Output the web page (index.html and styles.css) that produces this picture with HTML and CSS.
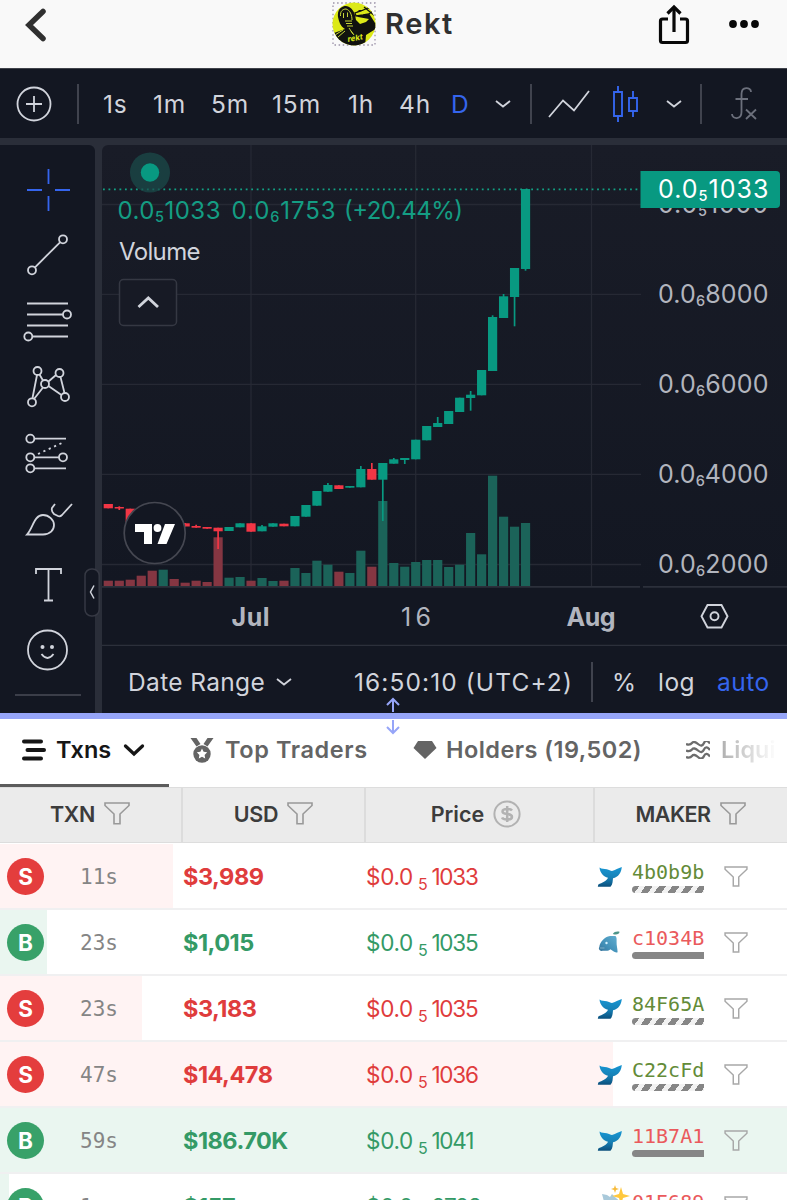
FILE: index.html
```html
<!DOCTYPE html>
<html lang="en">
<head>
<meta charset="utf-8">
<title>Rekt</title>
<link rel="stylesheet" href="styles.css">
</head>
<body>
<svg width="0" height="0" class="defs" aria-hidden="true">
  <defs>
    <linearGradient id="sea" x1="0" y1="0" x2="0" y2="1"><stop offset="0" stop-color="#1796d3"/><stop offset=".55" stop-color="#1680b5"/><stop offset="1" stop-color="#0b4f7c"/></linearGradient>
    <linearGradient id="dol" x1="1" y1="0" x2="0" y2="1"><stop offset="0" stop-color="#62afd0"/><stop offset=".6" stop-color="#4290b8"/><stop offset="1" stop-color="#356f96"/></linearGradient>
    <symbol id="funnel" viewBox="0 0 26 23"><path d="M1 1H25V3.500L16 12V21.800H10V12L1 3.500Z" fill="none" stroke="currentColor" stroke-width="1.600"/></symbol>
    <symbol id="whale" viewBox="0 0 26 24"><path d="M2.500 2.500C5 4.300 7 3.600 9.800 4.200C12 4.700 13.500 6 15 6C17 6 18.500 4.200 21 3.600L24.800 2C24.300 7.500 21.500 12.200 16 13.200C15.600 16 16 18.800 13.500 21.800H.8L1.300 19.400C5 18 9.500 16 11 12.800C6.500 11.500 3 8 2.500 2.500Z" fill="url(#sea)"/></symbol>
    <symbol id="dolphin" viewBox="0 0 26 24"><path d="M2.300 16C3 11 7.500 5.800 13 5H18.500C20 6.500 19.600 9 19.600 11C19.400 14.500 20.600 17.500 20.600 21.300C17.600 22.300 16 19.500 13.300 18.300C11.500 20.600 8.200 19.500 5.500 19.700C3 20.700 1 18 2.300 16Z" fill="url(#dol)"/><path d="M15.800 3C16.800.6 20.500 0 22.500.8C22.400 3.300 19.200 4.300 15.800 3Z" fill="#4d9589"/><circle cx="9.500" cy="12" r="1.200" fill="#d5f2ff"/><path d="M3 17H7.500" stroke="#8fbdd0" stroke-width=".8"/></symbol>
  </defs>
</svg>

<header class="top">
  <svg class="back" width="24" height="34" viewBox="0 0 24 34"><path d="M20 3.500L6 17L20 30.500" fill="none" stroke="#303030" stroke-width="5.500" stroke-linecap="round"/></svg>
  <div class="title">
    <svg width="46" height="46" viewBox="0 0 46 46">
      <rect x="2" y="2" width="42" height="42" fill="none" stroke="#9b92a8" stroke-width="1.300" stroke-dasharray="1.500 2.600"/>
      <clipPath id="coin"><circle cx="23" cy="23" r="21.500"/></clipPath>
      <g clip-path="url(#coin)"><rect width="46" height="46" fill="#dce918"/>
        <path d="M7 16C6 8 11 5 15 5C21 6 24 11 25 19L29 23L35 21L38 18L27 16L24 13L28 9L36 9L39 14L44 22L46 27L35 34L34 46H9L6 37L3 32L14 28C9 25 8 20 7 16Z" fill="#11120f"/>
        <path d="M9.500 15C9 10 12 8 15 8C19 9 21 14 21 19" fill="none" stroke="#c6d437" stroke-width="1"/>
        <path d="M12.500 12V17M16.500 11.500V16M14 20H21M15 22.500H21M16 25H22M18 27L22 33M12 29L4 34M14 30L7 36M20 30L23 34" stroke="#c6d437" stroke-width="1"/>
        <path d="M25 15L24 12L30 10L37 7L43 9L38 13L32 14Z" fill="#dce918" stroke="#11120f" stroke-width="1.300"/><path d="M33 6L44 15" stroke="#11120f" stroke-width="1.200"/>
      </g>
      <text x="17" y="41" class="coin-word" transform="rotate(-10 17 41)">rekt</text>
    </svg>
    <h1>Rekt</h1>
  </div>
  <svg class="share" width="34" height="42" viewBox="0 0 34 42" fill="none" stroke="#080808" stroke-width="3.200"><path d="M11 15H5.500Q3.500 15 3.500 17V36.500Q3.500 38.500 5.500 38.500H28.500Q30.500 38.500 30.500 36.500V17Q30.500 15 28.500 15H23"/><path d="M17 28V3"/><path d="M10.500 9.500L17 3L23.500 9.500"/></svg>
  <svg class="more" width="32" height="10" viewBox="0 0 32 10"><circle cx="5" cy="5" r="3.900"/><circle cx="16" cy="5" r="3.900"/><circle cx="27" cy="5" r="3.900"/></svg>
</header>

<nav class="intervals">
  <svg width="36" height="36" viewBox="0 0 36 36" fill="none" stroke="#d1d4dc" stroke-width="1.800"><circle cx="18" cy="18" r="16.500"/><path d="M10 18H26M18 10V26"/></svg>
  <i class="rule"></i>
  <span>1s</span><span>1m</span><span>5m</span><span>15m</span><span>1h</span><span>4h</span><span class="on">D</span>
  <svg width="16" height="10" viewBox="0 0 16 10" fill="none" stroke="#d1d4dc" stroke-width="1.800"><path d="M1 2L8 7.500L15 2"/></svg>
  <i class="rule"></i>
  <svg width="42" height="28" viewBox="0 0 42 28" fill="none" stroke="#d1d4dc" stroke-width="1.800"><path d="M1 27L15 10.500L26 20.500L41 1"/></svg>
  <svg width="26" height="38" viewBox="0 0 26 38" fill="none" stroke="#3565ed" stroke-width="1.900"><path d="M2 7H10V31H2ZM6 1V7M6 31V37M17 13H25V26H17ZM21 6V13M21 26V32"/></svg>
  <svg width="16" height="10" viewBox="0 0 16 10" fill="none" stroke="#d1d4dc" stroke-width="1.800"><path d="M1 2L8 7.500L15 2"/></svg>
  <i class="rule"></i>
  <svg width="28" height="36" viewBox="0 0 28 36" fill="none" stroke="#6c707c" stroke-width="1.800"><path d="M21 6C21 1 11.500 0 11.500 8V26C11.500 34 2 33.500 2 28M5.500 13H18M16 23.500L26 33M26 23.500L16 33"/></svg>
</nav>

<main class="workspace">
  <aside class="tools">
    <svg width="95" height="569" viewBox="0 145 95 569" fill="none" stroke="#d1d4dc" stroke-width="1.800">
      <g stroke="#3565ed"><path d="M48.500 169V184M48.500 196V211M27 190H42M55 190H70"/></g>
      <circle cx="63" cy="239.300" r="4"/><circle cx="32" cy="270.300" r="4"/><path d="M35 267.300L60 242.300"/>
      <path d="M27 303.500H68M27 314.500H63M27 325.500H68M32 336.500H68"/><circle cx="67" cy="314.500" r="4"/><circle cx="28.300" cy="336.500" r="4"/>
      <circle cx="37.500" cy="371" r="4"/><circle cx="59.500" cy="373" r="4"/><circle cx="45" cy="384" r="4"/><circle cx="32" cy="402.300" r="4"/><circle cx="65" cy="397" r="4"/><path d="M37 375L32.500 398M39.500 374.500L43 380.500M56 375L48.500 381.500M43 387.500L34 399M48.500 386L61.500 395M60.500 377L64.500 393"/>
      <circle cx="30.300" cy="438.700" r="4"/><circle cx="30.300" cy="457.300" r="4"/><circle cx="63" cy="457.300" r="4"/><circle cx="30.300" cy="468.300" r="4"/><path d="M34 438.700H66M34 457.300H59M34 468.300H66"/><path d="M38 454L63 442.500" stroke-dasharray="2.200 3.700"/>
      <path d="M27 534.500C33 528 34 515 43 515C49 515 54 520 54 525C54 530 50 534.500 43 534.500ZM55 504L52 508Q51 511 54 514L58 516Q60 517 62 515L72 504"/>
      <path d="M36 574V569H61V574M48.500 569V600.500M44 600.500H53"/>
      <circle cx="47.500" cy="650" r="19.500"/><path d="M41.500 654Q47.500 662 53.500 654"/><g fill="#d1d4dc" stroke="none"><circle cx="42.500" cy="647" r="2"/><circle cx="52" cy="647" r="2"/></g>
      <path d="M15 695H81" stroke="#3b3e49"/>
    </svg>
  </aside>
  <section class="chart">
    <svg id="plot" width="685" height="501" viewBox="102 145 685 501">
      <g stroke="#262934" stroke-width="1.300"><path d="M102 204.500H641M102 294.300H641M102 384.300H641M102 474.300H641M102 564.500H641M251 145V586M415.700 145V586M591.500 145V586"/></g>
      <g id="bars"></g>
      <path d="M102 586.800H640M643 586.800H787M102 645.500H787" stroke="#2c303b" stroke-width="1.700"/>
      <path d="M103 189.300H640" stroke="#12a184" stroke-width="1.700" stroke-dasharray="1.800 3.690"/>
      <circle cx="150" cy="172.500" r="20" fill="#1a4c4b" fill-opacity=".72"/><circle cx="150" cy="172.500" r="9.200" fill="#089981"/>
      <g class="quote"><text x="117.500" y="218.500" textLength="103">0.0<tspan class="sub" dy="3">5</tspan><tspan dy="-3">1033</tspan></text><text x="231.500" y="218.500" textLength="104">0.0<tspan class="sub" dy="3">6</tspan><tspan dy="-3">1753</tspan></text><text x="344" y="218.500" textLength="119">(+20.44%)</text></g>
      <text class="study" x="119" y="260" textLength="81.500">Volume</text>
      <rect x="119.500" y="279.500" width="57" height="46" rx="4" fill="#171a25" stroke="#353843" stroke-width="1.500"/>
      <path d="M138.500 307L148.300 298L158 307" fill="none" stroke="#d1d4dc" stroke-width="2.800"/>
      <circle cx="154.700" cy="533" r="30.500" fill="#131722" stroke="#454751" stroke-width="1.700"/>
      <path d="M135 524H152V544H144V532H135ZM165 524H175L166.500 544H157.500Z" fill="#fff"/><circle cx="157.500" cy="528" r="3.900" fill="#fff"/>
      <g class="scale">
        <text x="658" y="212.500" textLength="110">0.0<tspan class="sub" dy="3">5</tspan><tspan dy="-3">1000</tspan></text>
        <text x="658" y="302.500" textLength="110.500">0.0<tspan class="sub" dy="3">6</tspan><tspan dy="-3">8000</tspan></text>
        <text x="658" y="392.500" textLength="110.500">0.0<tspan class="sub" dy="3">6</tspan><tspan dy="-3">6000</tspan></text>
        <text x="658" y="482.500" textLength="110.500">0.0<tspan class="sub" dy="3">6</tspan><tspan dy="-3">4000</tspan></text>
        <text x="658" y="572.700" textLength="110.500">0.0<tspan class="sub" dy="3">6</tspan><tspan dy="-3">2000</tspan></text>
        <path d="M640.500 171H776Q780 171 780 175V204Q780 208 776 208H640.500Z" fill="#089981"/>
        <text class="last" x="658" y="197.500" textLength="110.500">0.0<tspan class="sub" dy="3">5</tspan><tspan dy="-3">1033</tspan></text>
        <text class="month" x="231.500" y="625.500" textLength="38">Jul</text><text x="401" y="625.500" textLength="30">16</text><text class="month" x="566.500" y="625.500" textLength="49">Aug</text>
      </g>
      <g fill="none" stroke="#d1d4dc" stroke-width="1.900"><path d="M707.500 605H721.500L727.500 616.300L721.500 627.500H707.500L701.500 616.300Z"/><circle cx="714.500" cy="616.300" r="4"/></g>
    </svg>
    <footer class="range">
      <span class="date">Date Range</span>
      <svg width="16" height="10" viewBox="0 0 16 10" fill="none" stroke="#d1d4dc" stroke-width="1.800"><path d="M1 2L8 7.500L15 2"/></svg>
      <span class="clock">16:50:10 (UTC+2)</span><i class="rule"></i><span>%</span><span>log</span><span class="on">auto</span>
    </footer>
  </section>
  <svg class="fold" width="16" height="50" viewBox="0 0 16 50" fill="#131722"><rect x="1" y="1" width="14.200" height="47" rx="6.500" stroke="#363944" stroke-width="1.500"/><path d="M10 17.500L6.500 24L10 30.500" fill="none" stroke="#d1d4dc" stroke-width="1.500"/></svg>
</main>

<div class="splitter">
  <svg width="16" height="38" viewBox="0 0 16 38" fill="none" stroke="#96a5f8" stroke-width="2"><path d="M8 15V2M2 8L8 2L14 8M8 23V36M2 30L8 36L14 30"/></svg>
</div>

<nav class="tabs">
  <div class="tab active">
    <svg width="26" height="24" viewBox="0 0 26 24" stroke="#161616" stroke-width="4" stroke-linecap="round"><path d="M3 3.500H20M6.500 12H23M3 20.500H20"/></svg>
    <span class="t-txns">Txns</span>
    <svg width="22" height="14" viewBox="0 0 22 14" fill="none" stroke="#161616" stroke-width="3.300" stroke-linecap="round"><path d="M2.500 3L11 11L19.500 3"/></svg>
  </div>
  <div class="tab traders"><svg width="24" height="26" viewBox="0 0 24 26" fill="#646464"><path d="M.5 1H6.500L10.500 7L6.500 9.500ZM17.500 1H23.500L17.500 9.500L13.500 7Z"/><circle cx="12" cy="17" r="8.700"/><path d="M12 11.500L13.600 14.800L17.200 15.300L14.600 17.900L15.200 21.500L12 19.800L8.800 21.500L9.400 17.900L6.800 15.300L10.400 14.800Z" fill="#fff"/></svg><span class="t-top">Top Traders</span></div>
  <div class="tab holders"><svg width="24" height="20" viewBox="0 0 24 20"><path d="M5 1H19L23.500 8L12 19L.5 8Z" fill="#646464"/></svg><span class="t-hold">Holders (19,502)</span></div>
  <div class="tab liquid"><svg width="24" height="18" viewBox="0 0 24 18" fill="none" stroke="#6c6c6c" stroke-width="2.300"><path d="M0 3Q4 4.500 6 2T12 3T18 2T24 2.500M0 9.500Q4 11 6 8.500T12 9.500T18 8.500T24 9M0 16Q4 17.500 6 15T12 16T18 15T24 15.500"/></svg><span class="fade">Liquid</span></div>
</nav>

<div class="thead">
  <div>TXN<svg class="hf" width="26" height="23"><use href="#funnel"/></svg></div>
  <div>USD<svg class="hf" width="26" height="23"><use href="#funnel"/></svg></div>
  <div>Price<svg class="coin" width="28" height="28" viewBox="0 0 28 28" fill="none" stroke="#b2b2b2" stroke-width="2"><circle cx="14" cy="14" r="12.600"/><path stroke-width="2.500" d="M19 10.500Q18 9 14.500 9Q9.500 9 9.500 11.500Q9.500 13.500 14 14Q19 14.500 19 17Q19 19.500 14 19.500Q10 19.500 9 17.500M14.200 6V22"/></svg></div>
  <div>MAKER<svg class="hf" width="26" height="23"><use href="#funnel"/></svg></div>
</div>

<section class="rows" id="rows"></section>
<script src="app.js"></script>
</body>
</html>
```
FILE: styles.css
```css
* { box-sizing: border-box; }
body { margin: 0; width: 787px; height: 1200px; overflow: hidden; background: #fff; font-family: Inter, "Liberation Sans", sans-serif; }
svg { display: block; flex: none; }
.defs { position: absolute; }

.top { height: 68px; display: grid; grid-template-columns: 331px 325px 72px 1fr; background: #f9f9f9; color: #303030; }
.back { margin: 8px 0 0 23px; }
.title { display: flex; gap: 8px; padding-top: 1px; }
.title h1 { margin: 3px 0 0; font-size: 29px; line-height: 40px; font-weight: 600; letter-spacing: 1.6px; }
.coin-word { font: italic 700 8px Inter, sans-serif; fill: #dce918; }
.share { margin: 4px 0 0 1px; }
.more { margin: 19px 0 0; fill: #080808; }

.intervals { height: 77px; display: grid; grid-template-columns: 61px 26px 50px 58px 61px 76px 51px 52px 44px 35px 18px 64px 54px 34px 29px 1fr; align-items: center; padding: 0 0 0 16px; background: #131722; border-top: 1px solid #40434b; border-bottom: 7px solid #2a2e39; color: #d1d4dc; font-size: 24.500px; letter-spacing: .9px; }
.intervals svg:last-child { margin-left: 1px; }
.on { color: #3565ed; }
.rule { width: 1.500px; height: 40px; background: #40434e; }

.workspace { height: 569px; display: grid; grid-template-columns: 95px 685px; column-gap: 7px; background: #2a2e39; position: relative; }
.tools { background: #131722; border-top-right-radius: 6px; height: 569px; }
.chart { background: linear-gradient(#191c27, #131722 441px); border-top-left-radius: 6px; }
.fold { position: absolute; left: 84px; top: 423px; }
.quote { font-size: 24px; fill: #149d83; }
.study { font-size: 24px; fill: #d1d4dc; }
.scale { font-size: 25px; fill: #b2b5be; }
.scale .last { fill: #fff; }
.scale .month { font-weight: 700; }
.sub { font-size: 14.500px; font-weight: 500; }
.range { height: 68px; display: grid; grid-template-columns: 148px 78px 237px 21px 46px 59px 1fr; align-items: center; padding: 3px 0 0 26px; color: #d1d4dc; font-size: 24.500px; white-space: nowrap; letter-spacing: .5px; }
.range .date { letter-spacing: .35px; }
.range .clock { letter-spacing: 1.1px; }

.splitter { height: 6px; margin-top: -1px; background: #96a5f8; position: relative; }
.splitter svg { position: absolute; left: 385px; top: -16px; }

.tabs { height: 68px; display: flex; background: #fff; color: #646464; font-size: 23.500px; font-weight: 600; white-space: nowrap; overflow: hidden; }
.tab { display: flex; align-items: center; padding-bottom: 7px; flex: none; }
.active { width: 169px; color: #161616; border-bottom: 3.500px solid #5c5c5c; padding: 0 0 3.500px 21px; }
.active span { margin: 0 12px 0 9px; width: 55px; }
.traders { padding-left: 21px; width: 244px; }
.traders span { margin-left: 11px; letter-spacing: .6px; }
.holders { width: 272px; }
.holders span { margin-left: 9px; letter-spacing: .45px; }
.liquid { width: 102px; padding-left: 1px; }
.liquid span { margin-left: 11px; }
.fade { background: linear-gradient(90deg, #b0b0b0, #fff 56px); -webkit-background-clip: text; background-clip: text; color: transparent; }

.thead { height: 56px; display: grid; grid-template-columns: 183px 183px 229px 192px; background: #ebebeb; border-top: 1.500px solid #ddd; border-bottom: 1.500px solid #ddd; font-size: 21.500px; font-weight: 600; color: #3c3c3c; }
.thead div { display: flex; align-items: center; justify-content: center; gap: 9px; padding: 0 1px 3px 0; border-right: 2px solid #dcdcdc; letter-spacing: -.3px; }
.thead div:nth-child(2) { padding-right: 0; }
.thead div:nth-child(3) { padding-right: 7px; letter-spacing: 0; }
.thead div:last-child { border: 0; padding-right: 1px; letter-spacing: -.5px; }
.hf { color: #999; }

.rows { margin-top: 1px; }
.row { height: 66px; display: grid; grid-template-columns: 80px 103px 183px 231px 35px 93px 1fr; align-items: center; padding-top: 1px; border-bottom: 2px solid #f0f0f1; background-repeat: no-repeat; }
.sell { color: #df3c3c; background-image: linear-gradient(#fff3f3, #fff3f3); }
.buy { color: #349a66; background-image: linear-gradient(#eaf6f0, #eaf6f0); }
.badge { margin-left: 7px; width: 37px; height: 37px; border-radius: 50%; display: grid; place-items: center; color: #fff; font-size: 22.500px; font-weight: 700; }
.sell .badge { background: #e43d3d; }
.buy .badge { background: #38a169; }
.age { color: #858585; font: 21px "DejaVu Sans Mono", monospace; }
.usd { font-size: 23.500px; font-weight: 700; letter-spacing: -.5px; }
.price { font-size: 22.500px; letter-spacing: -.3px; white-space: nowrap; }
.price em { font-style: normal; letter-spacing: -1.200px; }
.price small { font-size: 16px; margin: 0 4px 0 5px; position: relative; top: 5px; }
.maker { width: 72px; font: 20px/24px "DejaVu Sans Mono", monospace; }
.maker b { display: block; height: 7px; margin-top: 2px; border-radius: 4px 0 0 4px; background: #868686; }
.green { color: #638b38; }
.red { color: #ea5a5c; }
.green b { background: repeating-linear-gradient(125deg, #868686 0 6px, #f2f2f2 6px 11px); }
.filter { color: #a8a8a8; margin-left: -1px; }
.spark { overflow: visible; }
```
FILE: app.js
```javascript
// [colour, high, bodyTop, bodyBottom, low, volumeTop]
const candles = [
  ['r',504,504,508.3,508.3,580.7],['r',506.3,507,508.5,510,580.7],['r',508.7,508.7,522,522,579.7],['r',518,518,522,522,575.7],
  ['r',520,520,524,524,570.7],['g',520,521,524,524,569.7],['r',521,521,525,525,579],['r',523,523.3,526.5,526.5,582.7],
  ['r',524.7,526,527.7,527.7,580.7],['r',527,527,528.7,528.7,582],['r',527.7,527.7,531.3,549,537.3],['g',527,527,531,531,577.7],
  ['g',523.3,523.3,527.3,527.3,577],['r',523.3,523.3,531.7,531.7,580.7],['g',525,526.3,531.3,531.3,578],['g',523.3,523.3,526.7,526.7,581],
  ['r',523.7,523.7,526.3,526.3,580.7],['g',516,516,526.3,526.3,568],['g',505,505,516.7,516.7,573],['g',491,491,505.7,505.7,560.7],
  ['g',483,485,491.7,491.7,564.7],['r',485.3,485.3,489,489,571.7],['g',486,486,487.7,487.7,573],['g',466,469,487.3,487.3,550.7],
  ['r',463,469,479.7,479.7,566.7],['g',463,463,479.7,521,501],['g',458,459.3,463.7,463.7,563],['g',458,458,460,464,566.7],
  ['g',439.7,439.7,459.3,459.3,562],['g',426,426,440.3,440.3,560],['g',417,423,427,427,560],['g',411,411,424,424,567],
  ['g',397.7,397.7,412,412,564.7],['g',391,394.7,398,410.7,533],['g',370,370,395.3,395.3,554.3],['g',315.3,317,371,371,475.7],
  ['g',294,296.3,318,318,516.7],['g',268,268,297,326.3,526.7],['g',189,189,269,270.7,523]
];
const ink = { g: ['#089981', '#1b6359'], r: ['#f23645', '#853642'] };
let out = '';
candles.forEach(([c, , , , , v], i) => {
  const x = 108.3 + 10.98 * i;
  out += `<rect x="${x - 4.6}" y="${v}" width="9.2" height="${586 - v}" fill="${ink[c][1]}"/>`;
});
candles.forEach(([c, h, t, b, l], i) => {
  const x = 108.3 + 10.98 * i;
  out += `<path d="M${x} ${h}V${l}" stroke="${ink[c][0]}" stroke-width="1.7"/><rect x="${x - 4.6}" y="${t}" width="9.2" height="${b - t}" fill="${ink[c][0]}"/>`;
});
document.getElementById('bars').innerHTML = out;

const sparkle = '<svg class="spark" width="36" height="40" viewBox="0 0 36 40"><path d="M5 7L10 8L13 10L15 7L19 11L25 16L20 28L10 26Z" fill="#a9c9da"/><path d="M24 0L26 7L33 9L26 11L24 18L22 11L15 9L22 7Z" fill="#ffc83d"/><path d="M18 -2L19 1L22 2L19 3L18 6L17 3L14 2L17 1Z" fill="#f7bb3b"/></svg>';
const rows = [
  ['S','11s','$3,989',5,'1033','whale','4b0b9b','green',173],
  ['B','23s','$1,015',5,'1035','dolphin','c1034B','red',47],
  ['S','23s','$3,183',5,'1035','whale','84F65A','green',142],
  ['S','47s','$14,478',5,'1036','whale','C22cFd','green',613],
  ['B','59s','$186.70K',5,'1041','whale','11B7A1','red',787],
  ['B','1m','$157',6,'9798','','01E689','red',9]
];
document.getElementById('rows').innerHTML = rows.map(([s, age, usd, n, p, icon, maker, tone, w]) => `
  <div class="row ${s === 'S' ? 'sell' : 'buy'}" style="background-size:${w}px 100%">
    <span class="badge">${s}</span><span class="age">${age}</span><span class="usd">${usd}</span>
    <span class="price">$0.0<small>${n}</small><em>${p}</em></span>
    ${icon ? `<svg width="26" height="24"><use href="#${icon}"/></svg>` : sparkle}
    <span class="maker ${tone}">${maker}<b></b></span>
    <svg class="filter" width="24" height="21"><use href="#funnel"/></svg>
  </div>`).join('');
```
